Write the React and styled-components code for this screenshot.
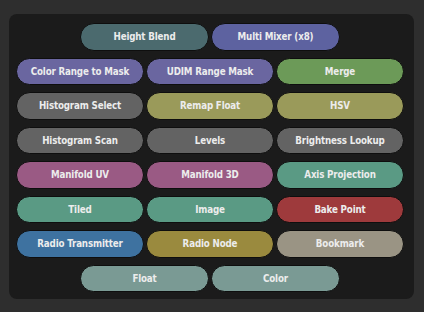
import styled, { createGlobalStyle } from 'styled-components';

const GlobalStyle = createGlobalStyle`
  html, body {
    margin: 0;
    padding: 0;
    background: #2e2e2e;
  }
`;

const Page = styled.div`
  width: 424px;
  height: 312px;
  padding: 14px 10px 13px 9px;
  box-sizing: border-box;
  background: #2e2e2e;
`;

const Panel = styled.div`
  height: 100%;
  box-sizing: border-box;
  background: #1b1b1b;
  border-radius: 8px;
  padding: 9px 10px 9px 7px;
  display: flex;
  flex-direction: column;
  gap: 7px;
`;

const Row = styled.div`
  display: flex;
  justify-content: center;
  gap: 2px;
`;

const NodeButton = styled.button`
  width: 129px;
  height: 27.5px;
  box-sizing: border-box;
  border: 1px solid #0e0e0e;
  border-radius: 14px;
  background: ${p => p.$bg};
  color: #ececec;
  font-family: Tahoma, "DejaVu Sans Condensed", "DejaVu Sans", sans-serif;
  font-stretch: condensed;
  font-weight: bold;
  font-size: 9.7px;
  letter-spacing: -0.15px;
  padding: 0;
  cursor: pointer;
`;

const colors = {
  teal: '#4b6a6e',
  indigo: '#5d62a0',
  violet: '#6a66a0',
  green: '#6c9a58',
  grey: '#636363',
  olive: '#9a9a5a',
  plum: '#9a5a84',
  sea: '#5a9a84',
  red: '#9e3a3c',
  blue: '#3e72a0',
  gold: '#9a8a3e',
  stone: '#9a9484',
  sage: '#7a9a94',
};

const rows = [
  [['Height Blend', 'teal'], ['Multi Mixer (x8)', 'indigo']],
  [['Color Range to Mask', 'violet'], ['UDIM Range Mask', 'violet'], ['Merge', 'green']],
  [['Histogram Select', 'grey'], ['Remap Float', 'olive'], ['HSV', 'olive']],
  [['Histogram Scan', 'grey'], ['Levels', 'grey'], ['Brightness Lookup', 'grey']],
  [['Manifold UV', 'plum'], ['Manifold 3D', 'plum'], ['Axis Projection', 'sea']],
  [['Tiled', 'sea'], ['Image', 'sea'], ['Bake Point', 'red']],
  [['Radio Transmitter', 'blue'], ['Radio Node', 'gold'], ['Bookmark', 'stone']],
  [['Float', 'sage'], ['Color', 'sage']],
];

export default function App() {
  return (
    <>
      <GlobalStyle />
      <Page>
        <Panel>
          {rows.map((row, i) => (
            <Row key={i}>
              {row.map(([label, c]) => (
                <NodeButton key={label} $bg={colors[c]}>{label}</NodeButton>
              ))}
            </Row>
          ))}
        </Panel>
      </Page>
    </>
  );
}
